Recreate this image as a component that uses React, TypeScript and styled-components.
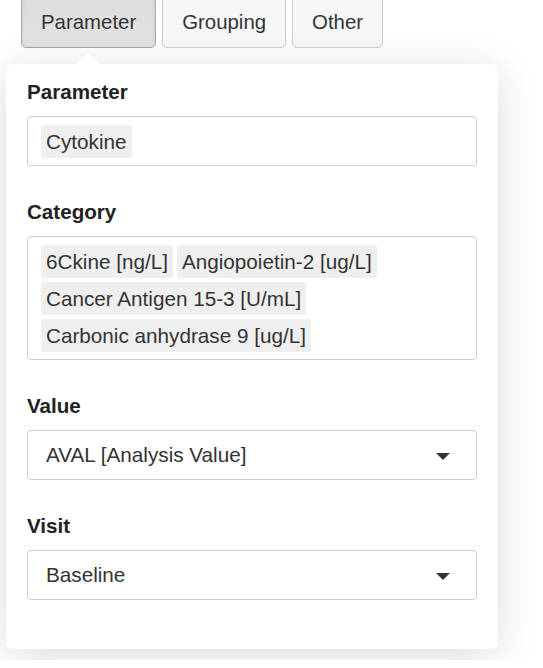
import React from "react";
import styled, { createGlobalStyle } from "styled-components";

const GlobalStyle = createGlobalStyle`
  html, body {
    margin: 0;
    padding: 0;
    background: #ffffff;
    font-family: "Liberation Sans", Arial, sans-serif;
    color: #333333;
    overflow: hidden;
  }
`;

const Page = styled.div`
  width: 543px;
  height: 668px;
  background: #ffffff;
`;

const Tabs = styled.div`
  display: flex;
  gap: 6px;
  margin: -8px 0 0 21px;
`;

const TabButton = styled.button<{ $active?: boolean }>`
  height: 56px;
  padding: 4px 19px 0;
  font-family: "Liberation Sans", Arial, sans-serif;
  font-size: 20.4px;
  color: #333333;
  border-radius: 5px;
  border: 1px solid ${(p) => (p.$active ? "#a9a9a9" : "#cccccc")};
  background: ${(p) => (p.$active ? "linear-gradient(#dcdcdc, #e3e3e3)" : "#f7f7f7")};
  box-shadow: ${(p) => (p.$active ? "inset 0 2px 4px rgba(0,0,0,0.1)" : "none")};
`;

const Panel = styled.div`
  position: relative;
  margin: 16px 0 0 6px;
  width: 492px;
  background: #ffffff;
  border-radius: 6px;
  box-shadow: 0 6px 40px rgba(0, 0, 0, 0.14);
  padding: 15px 21px 16px 21px;
  box-sizing: border-box;
`;

const Arrow = styled.div`
  position: absolute;
  top: -11px;
  left: 71px;
  width: 0;
  height: 0;
  border-left: 11px solid transparent;
  border-right: 11px solid transparent;
  border-bottom: 11px solid #ffffff;
`;

const Group = styled.div`
  margin-bottom: 33px;
`;

const Label = styled.div`
  font-weight: bold;
  font-size: 20.6px;
  line-height: 26px;
  color: #222;
  margin-bottom: 11px;
`;

const ChipBox = styled.div`
  display: flex;
  flex-wrap: wrap;
  gap: 4px;
  min-height: 50px;
  box-sizing: border-box;
  border: 1px solid #cccccc;
  border-radius: 4px;
  padding: 8px 12px 7px 13px;
  align-content: flex-start;
`;

const Chip = styled.span`
  background: #efefef;
  border-radius: 3px;
  padding: 5px;
  font-size: 20.7px;
  line-height: 23px;
  color: #333;
`;

const Select = styled.div`
  display: flex;
  align-items: center;
  justify-content: space-between;
  height: 50px;
  box-sizing: border-box;
  border: 1px solid #cccccc;
  border-radius: 4px;
  padding: 0 26px 0 18px;
  font-size: 20.7px;
  color: #333;
`;

const Caret = styled.span`
  width: 0;
  height: 0;
  border-left: 7px solid transparent;
  border-right: 7px solid transparent;
  border-top: 7px solid #333;
  margin-top: 2px;
`;

export default function App() {
  return (
    <Page>
      <GlobalStyle />
      <Tabs>
        <TabButton $active>Parameter</TabButton>
        <TabButton>Grouping</TabButton>
        <TabButton>Other</TabButton>
      </Tabs>
      <Panel>
        <Arrow />
        <Group>
          <Label>Parameter</Label>
          <ChipBox>
            <Chip>Cytokine</Chip>
          </ChipBox>
        </Group>
        <Group>
          <Label>Category</Label>
          <ChipBox>
            <Chip>6Ckine [ng/L]</Chip>
            <Chip>Angiopoietin-2 [ug/L]</Chip>
            <Chip>Cancer Antigen 15-3 [U/mL]</Chip>
            <Chip>Carbonic anhydrase 9 [ug/L]</Chip>
          </ChipBox>
        </Group>
        <Group>
          <Label>Value</Label>
          <Select>
            AVAL [Analysis Value]
            <Caret />
          </Select>
        </Group>
        <Group>
          <Label>Visit</Label>
          <Select>
            Baseline
            <Caret />
          </Select>
        </Group>
      </Panel>
    </Page>
  );
}
